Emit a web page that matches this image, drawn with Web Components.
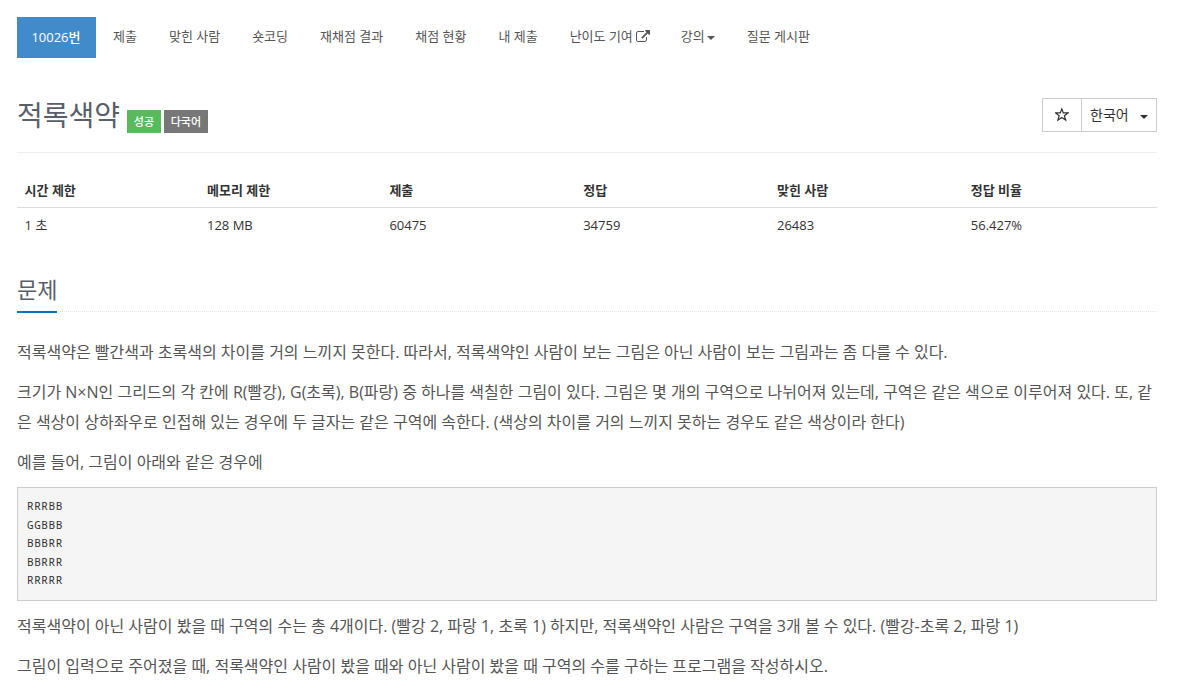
<!DOCTYPE html>
<html lang="ko">
<head>
<meta charset="utf-8">
<title>10026번: 적록색약</title>
<style>
  body {
    margin: 0;
    padding: 17px 41px 0 17px;
    background: #fff;
    color: #333;
    font: 13px/20.8px "Open Sans", "Noto Sans CJK KR", sans-serif;
    overflow: hidden;
  }
</style>
</head>
<body>
<problem-menu>
  <menu-item active>10026번</menu-item>
  <menu-item>제출</menu-item>
  <menu-item>맞힌 사람</menu-item>
  <menu-item>숏코딩</menu-item>
  <menu-item>재채점 결과</menu-item>
  <menu-item>채점 현황</menu-item>
  <menu-item>내 제출</menu-item>
  <menu-item icon="external">난이도 기여</menu-item>
  <menu-item icon="caret">강의</menu-item>
  <menu-item>질문 게시판</menu-item>
</problem-menu>
<problem-header>
  적록색약
  <problem-label slot="labels" kind="success">성공</problem-label>
  <problem-label slot="labels">다국어</problem-label>
  <language-picker slot="tools">한국어</language-picker>
</problem-header>
<problem-info data-time="1 초" data-memory="128 MB" data-submit="60475" data-accepted="34759" data-people="26483" data-ratio="56.427%"></problem-info>
<problem-section data-title="문제">
  <problem-text>적록색약은 빨간색과 초록색의 차이를 거의 느끼지 못한다. 따라서, 적록색약인 사람이 보는 그림은 아닌 사람이 보는 그림과는 좀 다를 수 있다.</problem-text>
  <problem-text>크기가 N×N인 그리드의 각 칸에 R(빨강), G(초록), B(파랑) 중 하나를 색칠한 그림이 있다. 그림은 몇 개의 구역으로 나뉘어져 있는데, 구역은 같은 색으로 이루어져 있다. 또, 같은 색상이 상하좌우로 인접해 있는 경우에 두 글자는 같은 구역에 속한다. (색상의 차이를 거의 느끼지 못하는 경우도 같은 색상이라 한다)</problem-text>
  <problem-text>예를 들어, 그림이 아래와 같은 경우에</problem-text>
  <sample-data>RRRBB
GGBBB
BBBRR
BBRRR
RRRRR</sample-data>
  <problem-text>적록색약이 아닌 사람이 봤을 때 구역의 수는 총 4개이다. (빨강 2, 파랑 1, 초록 1) 하지만, 적록색약인 사람은 구역을 3개 볼 수 있다. (빨강-초록 2, 파랑 1)</problem-text>
  <problem-text>그림이 입력으로 주어졌을 때, 적록색약인 사람이 봤을 때와 아닌 사람이 봤을 때 구역의 수를 구하는 프로그램을 작성하시오.</problem-text>
</problem-section>

<script>
class ProblemMenu extends HTMLElement {
  constructor() {
    super();
    this.attachShadow({ mode: 'open' });
  }

  connectedCallback() {
    this.shadowRoot.innerHTML = `
      <style>
        :host { display: block; }
        nav { display: flex; gap: 2px; height: 41px; }
      </style>
      <nav><slot></slot></nav>
    `;
  }
}

class MenuItem extends HTMLElement {
  constructor() {
    super();
    this.attachShadow({ mode: 'open' });
  }

  connectedCallback() {
    const icons = {
      external: `<svg class="external" viewBox="0 0 1792 1792"><path fill="currentColor" d="M1408 928v320q0 119-84.500 203.500t-203.500 84.500h-832q-119 0-203.500-84.500t-84.500-203.500v-832q0-119 84.500-203.500t203.500-84.500h704q14 0 23 9t9 23v64q0 14-9 23t-23 9h-704q-66 0-113 47t-47 113v832q0 66 47 113t113 47h832q66 0 113-47t47-113v-320q0-14 9-23t23-9h64q14 0 23 9t9 23zm384-864v512q0 26-19 45t-45 19-45-19l-176-176-652 652q-10 10-23 10t-23-10l-114-114q-10-10-10-23t10-23l652-652-176-176q-19-19-19-45t19-45 45-19h512q26 0 45 19t19 45z"/></svg>`,
      caret: '<i class="caret"></i>'
    };
    this.shadowRoot.innerHTML = `
      <style>
        :host { display: block; color: #555; white-space: nowrap; }
        :host([active]) { background: #428bca; color: #fff; }
        a { display: flex; align-items: center; padding: 9px 15.1px 11px 14.9px; color: inherit; }
        :host([active]) a { padding: 9.5px 15.6px 10.5px 14.4px; font-weight: 500; }
        .external { width: 14px; height: 14px; margin: 2px -1px 0 3px; }
        .caret {
          margin: 3px 0 0 2px;
          border-top: 4px solid;
          border-left: 4px solid transparent;
          border-right: 4px solid transparent;
        }
      </style>
      <a><slot></slot>${icons[this.getAttribute('icon')] || ''}</a>
    `;
  }
}

class ProblemHeader extends HTMLElement {
  constructor() {
    super();
    this.attachShadow({ mode: 'open' });
  }

  connectedCallback() {
    this.shadowRoot.innerHTML = `
      <style>
        :host {
          display: flex;
          justify-content: space-between;
          align-items: flex-start;
          height: 54px;
          margin-top: 40px;
          border-bottom: 1px solid #eee;
        }
        .title { display: flex; }
        h1 {
          margin: 0 7px 0 0;
          color: #585f69;
          font-size: 28px;
          font-weight: 400;
          line-height: 34px;
        }
        .labels { display: flex; gap: 3px; padding-top: 12px; }
      </style>
      <div class="title">
        <h1><slot></slot></h1>
        <div class="labels"><slot name="labels"></slot></div>
      </div>
      <slot name="tools"></slot>
    `;
  }
}

class ProblemLabel extends HTMLElement {
  constructor() {
    super();
    this.attachShadow({ mode: 'open' });
  }

  connectedCallback() {
    this.shadowRoot.innerHTML = `
      <style>
        :host {
          display: block;
          height: 23px;
          padding: 0 6.8px;
          background: #777;
          color: #fff;
          font-size: 11px;
          font-weight: 500;
          line-height: 23px;
        }
        :host([kind="success"]) { background: #5cb85c; }
      </style>
      <slot></slot>
    `;
  }
}

class LanguagePicker extends HTMLElement {
  constructor() {
    super();
    this.attachShadow({ mode: 'open' });
  }

  connectedCallback() {
    this.shadowRoot.innerHTML = `
      <style>
        :host {
          display: flex;
          box-sizing: border-box;
          width: 115px;
          height: 34px;
          border: 1px solid #ccc;
          font-size: 14px;
          line-height: 32px;
        }
        .star {
          display: flex;
          align-items: center;
          justify-content: center;
          width: 38px;
          border-right: 1px solid #ccc;
        }
        .language { display: flex; flex: 1; align-items: center; padding: 0 8px; justify-content: space-between; }
        .language span { margin-top: -1px; }
        .caret {
          margin-top: 3px;
          border-top: 4px solid;
          border-left: 4px solid transparent;
          border-right: 4px solid transparent;
        }
      </style>
      <div class="star">
        <svg width="14" height="14" viewBox="0 0 14 14" fill="none" stroke="currentColor" stroke-width="1.200"><path d="M6.800 .900L8.300 4.900H13L9.400 7.700L10.700 12L6.800 9.400L2.900 12L4.200 7.700L.600 4.900H5.300Z"/></svg>
      </div>
      <div class="language"><span><slot></slot></span><i class="caret"></i></div>
    `;
  }
}

class ProblemInfo extends HTMLElement {
  constructor() {
    super();
    this.attachShadow({ mode: 'open' });
  }

  connectedCallback() {
    const { time, memory, submit, accepted, people, ratio } = this.dataset;
    this.shadowRoot.innerHTML = `
      <style>
        :host { display: block; margin-top: 19px; }
        table { width: 100%; table-layout: fixed; border-collapse: collapse; }
        th, td { box-sizing: border-box; padding: 7px 8px 7px 7.6px; text-align: left; }
        th { width: 17%; padding: 7.5px 8px 6.5px 7.6px; border-bottom: 1px solid #ddd; font-weight: 600; }
        th:nth-child(-n+2) { width: 16%; }
      </style>
      <table>
        <thead>
          <tr><th>시간 제한</th><th>메모리 제한</th><th>제출</th><th>정답</th><th>맞힌 사람</th><th>정답 비율</th></tr>
        </thead>
        <tbody>
          <tr><td>${time}</td><td>${memory}</td><td>${submit}</td><td>${accepted}</td><td>${people}</td><td>${ratio}</td></tr>
        </tbody>
      </table>
    `;
  }
}

class ProblemSection extends HTMLElement {
  constructor() {
    super();
    this.attachShadow({ mode: 'open' });
  }

  connectedCallback() {
    this.shadowRoot.innerHTML = `
      <style>
        :host { display: block; margin-top: 29px; }
        .headline { display: flex; height: 39px; margin-bottom: 25px; border-bottom: 1px dotted #e4e9f0; }
        h2 {
          height: 39px;
          margin: 0;
          border-bottom: 2px solid #0076c0;
          color: #585f69;
          font-size: 22px;
          font-weight: 400;
          line-height: 35px;
        }
      </style>
      <div class="headline"><h2>${this.dataset.title}</h2></div>
      <slot></slot>
    `;
  }
}

class ProblemText extends HTMLElement {
  constructor() {
    super();
    this.attachShadow({ mode: 'open' });
  }

  connectedCallback() {
    this.shadowRoot.innerHTML = `
      <style>
        :host { display: block; color: #555; font-size: 16px; line-height: 30px; }
        p { margin: 0 0 10px; }
      </style>
      <p><slot></slot></p>
    `;
  }
}

class SampleData extends HTMLElement {
  constructor() {
    super();
    this.attachShadow({ mode: 'open' });
  }

  connectedCallback() {
    this.shadowRoot.innerHTML = `
      <style>
        :host { display: block; }
        pre {
          box-sizing: border-box;
          height: 114px;
          margin: 0 0 10px;
          padding: 9.5px 9px 8px;
          border: 1px solid #ccc;
          background: #f5f5f5;
          font: 11px/18.57px "Noto Sans Mono", "DejaVu Sans Mono", monospace;
          letter-spacing: .57px;
        }
      </style>
      <pre><slot></slot></pre>
    `;
  }
}

customElements.define('problem-menu', ProblemMenu);
customElements.define('menu-item', MenuItem);
customElements.define('problem-header', ProblemHeader);
customElements.define('problem-label', ProblemLabel);
customElements.define('language-picker', LanguagePicker);
customElements.define('problem-info', ProblemInfo);
customElements.define('problem-section', ProblemSection);
customElements.define('problem-text', ProblemText);
customElements.define('sample-data', SampleData);
</script>
</body>
</html>
